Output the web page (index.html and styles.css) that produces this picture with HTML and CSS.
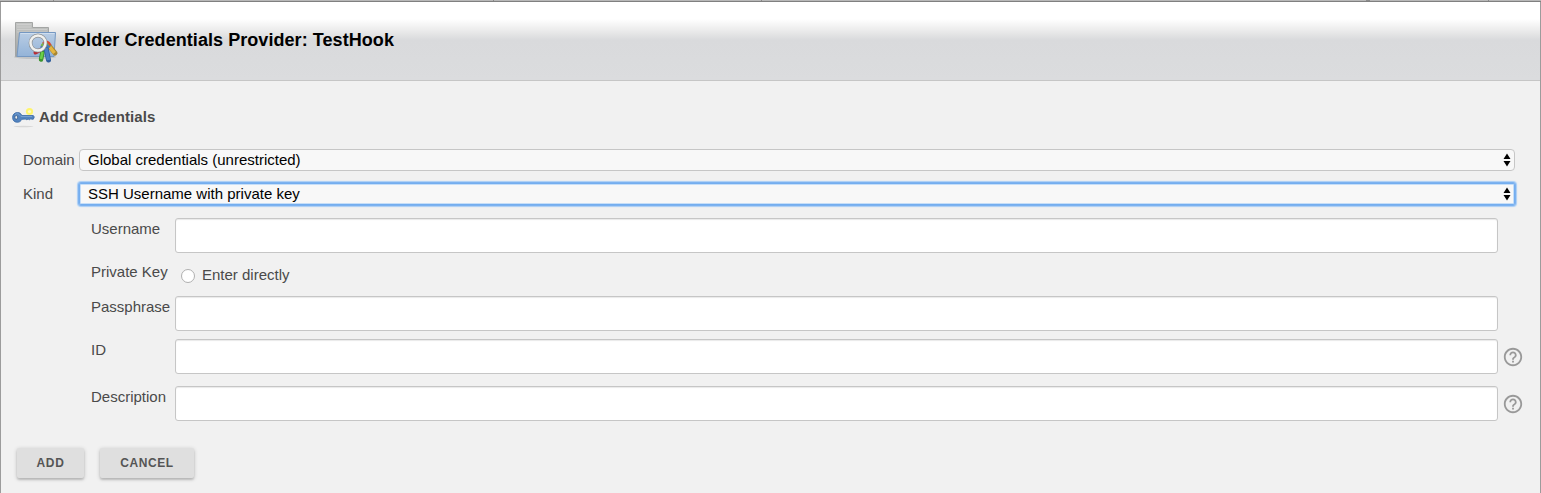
FILE: index.html
```html
<!DOCTYPE html>
<html lang="en">
<head>
<meta charset="utf-8">
<title>Folder Credentials Provider: TestHook</title>
<link rel="stylesheet" href="styles.css">
</head>
<body>
<div class="backdrop"><i class="tick t1"></i><i class="tick t2"></i><i class="tick t3"></i><i class="tick t4"></i><i class="tick t5"></i></div>
<main class="dialog">
  <header class="header">
    <svg class="folder-icon" viewBox="0 0 46 46" aria-hidden="true">
      <defs>
        <linearGradient id="back" x2="0" y2="1"><stop stop-color="#c4c6c4"/><stop offset="1" stop-color="#a2a4a3"/></linearGradient>
        <linearGradient id="front" x2="0" y2="1"><stop stop-color="#b9cde4"/><stop offset="1" stop-color="#93b3d8"/></linearGradient>
      </defs>
      <ellipse cx="22" cy="36" rx="21" ry="2" fill="#c2c4c6"/>
      <path d="M2.500 35.500v-34h17v5h16v28z" fill="url(#back)" stroke="#a3a5a4"/>
      <path d="M4 3.500h14M4 6h14M4 8.500h30M4 11h30" stroke="#d2d3d2" stroke-width=".7"/>
      <path d="M6.500 11.500h36l-1.500 24h-37z" fill="url(#front)" stroke="#7598c2"/>
      <path d="M7.500 12.500h34" stroke="#cfdeee"/>
      <path d="M22.500 31.500l4-2" stroke="#b92d36" stroke-width="4" stroke-linecap="round"/>
      <path d="M37 26l5 6" stroke="#a9862f" stroke-width="5" stroke-linecap="round"/>
      <path d="M36 25l5.500 7" stroke="#e5b63f" stroke-width="3.500"/>
      <path d="M29.500 31l-1.500 7.500" stroke="#3a942d" stroke-width="4.500" stroke-linecap="round"/>
      <path d="M29.500 31l-1.500 7" stroke="#6ccf48" stroke-width="2.600"/>
      <path d="M33 27l2.500 12" stroke="#2f5d9c" stroke-width="5" stroke-linecap="round"/>
      <path d="M33 27l2.500 12" stroke="#4b7fc2" stroke-width="3.500"/>
      <path d="M29 30c-1-6 3-8 8-4" fill="none" stroke="#4478ba" stroke-width="3.500"/>
      <path d="M28.500 25c2-4 6-4 9-.500" fill="none" stroke="#76b844" stroke-width="2"/>
      <path d="M30 22.500c3-3 6-2 7.500 2" fill="none" stroke="#d8482f" stroke-width="2.400"/>
      <circle cx="25" cy="22" r="7.500" fill="none" stroke="#8e9294" stroke-width="3.800"/>
      <circle cx="25" cy="22" r="7.500" fill="none" stroke="#f0f1ef" stroke-width="2.500"/>
    </svg>
    <h1>Folder Credentials Provider: TestHook</h1>
  </header>
  <form class="form">
    <div class="section-title">
      <svg class="key-icon" viewBox="0 0 24 22" aria-hidden="true">
        <ellipse cx="11.500" cy="19.500" rx="10" ry=".8" fill="#d8d8d8"/>
        <circle cx="17.500" cy="4.500" r="3.600" fill="#fff56c"/><circle cx="17.500" cy="4.500" r="1.600" fill="#fff9c4"/>
        <path d="M.600 10.500c0-3 2-5 5-5 2.200 0 3.500 1.200 4.200 3h11.500l1 1.500-1 2.200h-1.500l-1-.400-1.200.900-1.500-.600-1.300.600-1.500-.600-3.500.200c-1 2-2.300 3-4.500 3-2.900 0-4.700-2-4.700-4.800z" fill="#5283bf" stroke="#3968a5" stroke-width=".8"/>
        <path d="M3 7.500c2-1.300 4-1 5 1l1 1h11" fill="none" stroke="#7ba3d2" stroke-width=".9"/>
        <ellipse cx="4.200" cy="10.300" rx="1.300" ry="2" fill="#edf1f4" stroke="#294e7b" stroke-width=".7"/>
      </svg>
      <h2>Add Credentials</h2>
    </div>
    <div class="row domain"><span class="label">Domain</span>
      <div class="select"><span class="value">Global credentials (unrestricted)</span><svg class="arrows" viewBox="0 0 8 14"><path d="M4 .500L7.500 6H.500zM4 13.500L.500 8h7z"/></svg></div></div>
    <div class="row kind"><span class="label">Kind</span>
      <div class="select focused"><span class="value">SSH Username with private key</span><svg class="arrows" viewBox="0 0 8 14"><path d="M4 .500L7.500 6H.500zM4 13.500L.500 8h7z"/></svg></div></div>
    <div class="fields">
      <label class="field username"><span class="name">Username</span><input class="input" type="text"></label>
      <div class="field key"><span class="name">Private Key</span><label class="choice"><span class="radio"></span><span class="choice-text">Enter directly</span></label></div>
      <label class="field passphrase"><span class="name">Passphrase</span><input class="input" type="text"></label>
      <label class="field id"><span class="name">ID</span><input class="input" type="text"><svg class="help" viewBox="0 0 24 24"><path d="M11 18h2v-2h-2v2zm1-16C6.480 2 2 6.480 2 12s4.480 10 10 10 10-4.480 10-10S17.520 2 12 2zm0 18c-4.410 0-8-3.590-8-8s3.590-8 8-8 8 3.590 8 8-3.590 8-8 8zm0-14c-2.210 0-4 1.790-4 4h2c0-1.100.900-2 2-2s2 .900 2 2c0 2-3 1.750-3 5h2c0-2.250 3-2.500 3-5 0-2.210-1.790-4-4-4z"/></svg></label>
      <label class="field description"><span class="name">Description</span><input class="input" type="text"><svg class="help" viewBox="0 0 24 24"><path d="M11 18h2v-2h-2v2zm1-16C6.480 2 2 6.480 2 12s4.480 10 10 10 10-4.480 10-10S17.520 2 12 2zm0 18c-4.410 0-8-3.590-8-8s3.590-8 8-8 8 3.590 8 8-3.590 8-8 8zm0-14c-2.210 0-4 1.790-4 4h2c0-1.100.900-2 2-2s2 .900 2 2c0 2-3 1.750-3 5h2c0-2.250 3-2.500 3-5 0-2.210-1.790-4-4-4z"/></svg></label>
    </div>
    <div class="actions"><button class="button add" type="button">ADD</button><button class="button cancel" type="button">CANCEL</button></div>
  </form>
</main>
</body>
</html>
```
FILE: styles.css
```css
* { box-sizing: border-box; }
body {
  margin: 0;
  height: 493px;
  overflow: hidden;
  display: flex;
  flex-direction: column;
  background: #f1f1f1;
  color: #4a4a4a;
  font: 15px/18px "Liberation Sans", Arial, sans-serif;
}
.backdrop {
  height: 2px;
  flex: none;
  display: flex;
  background: #b8b8b8;
  border-bottom: 1px solid #808080;
}
.tick { width: 1px; height: 1px; background: #8a8a8a; }
.t1 { margin-left: 53px; }
.t2 { margin-left: 439px; }
.t3 { margin-left: 267px; }
.t4 { margin-left: 604px; width: 4px; }
.t5 { margin-left: 118px; }
.dialog {
  flex: 1;
  border: solid #9c9c9c;
  border-width: 0 1px;
}
.header {
  height: 79px;
  display: flex;
  border-bottom: 1px solid #c6c6c6;
  background: linear-gradient(#fff 0, #fff 17px, #ececec 28px, #d9dadc 38px, #dbdcde 100%);
}
.folder-icon { width: 46px; height: 46px; margin: 19px 0 0 12px; }
h1 {
  margin: 28px 0 0 5px;
  color: #000;
  font-size: 18px;
  line-height: 20px;
  letter-spacing: .06px;
  white-space: nowrap;
}
.form { display: flex; flex-direction: column; }
.section-title {
  display: flex;
  align-items: flex-start;
  height: 22px;
  margin: 26px 0 0 11px;
}
.key-icon { width: 24px; height: 22px; }
h2 {
  margin: 1px 0 0 3px;
  font-size: 15px;
  line-height: 18px;
  letter-spacing: .1px;
}
.row { display: flex; margin-left: 22px; height: 22px; line-height: 22px; }
.domain { margin-top: 20px; }
.kind { margin-top: 12px; }
.label { width: 56px; }
.select {
  width: 1436px;
  height: 22px;
  display: flex;
  justify-content: space-between;
  padding: 0 3px 0 8px;
  border: 1px solid #c6c6c6;
  border-radius: 4px;
  background: #f8f8f8;
  color: #000;
  line-height: 20px;
}
.select.focused {
  border: 1px solid #74aeef;
  border-radius: 2px;
  outline: 1px solid #7db2f0;
  box-shadow: 0 0 1px 2px #a9cef6, inset 0 0 0 1px #c6def8;
}
.arrows { width: 8px; height: 14px; margin-top: 3px; }
.fields { display: flex; flex-direction: column; margin: 13px 0 0 90px; }
.field { display: flex; height: 35px; }
.name { width: 84px; padding-top: 2px; white-space: nowrap; }
.input {
  width: 1323px;
  height: 35px;
  border: 1px solid #c6c6c6;
  border-radius: 3px;
  background: #fff;
  box-shadow: inset 0 1px 1px #e9e9e9;
}
.key { margin-top: 8px; }
.choice { display: flex; margin: 5px 0 0 6px; }
.radio {
  width: 14px;
  height: 14px;
  margin: 3px 7px 0 0;
  border: 1px solid #b0b0b0;
  border-radius: 50%;
  background: #fff;
}
.id { margin-top: 8px; }
.description { margin-top: 12px; }
.help { width: 22px; height: 22px; margin: 7px 0 0 4px; fill: #999; }
.actions { display: flex; gap: 16px; margin: 27px 0 0 16px; }
.button {
  height: 30px;
  padding: 0;
  border: 0;
  border-radius: 2px;
  background: #dfdfdf;
  color: #555;
  box-shadow: 0 1px 4px rgba(0, 0, 0, .2), 0 2px 2px rgba(0, 0, 0, .13);
  font: bold 12px/30px "Liberation Sans", Arial, sans-serif;
  letter-spacing: .6px;
}
.add { width: 67px; }
.cancel { width: 94px; }
```
